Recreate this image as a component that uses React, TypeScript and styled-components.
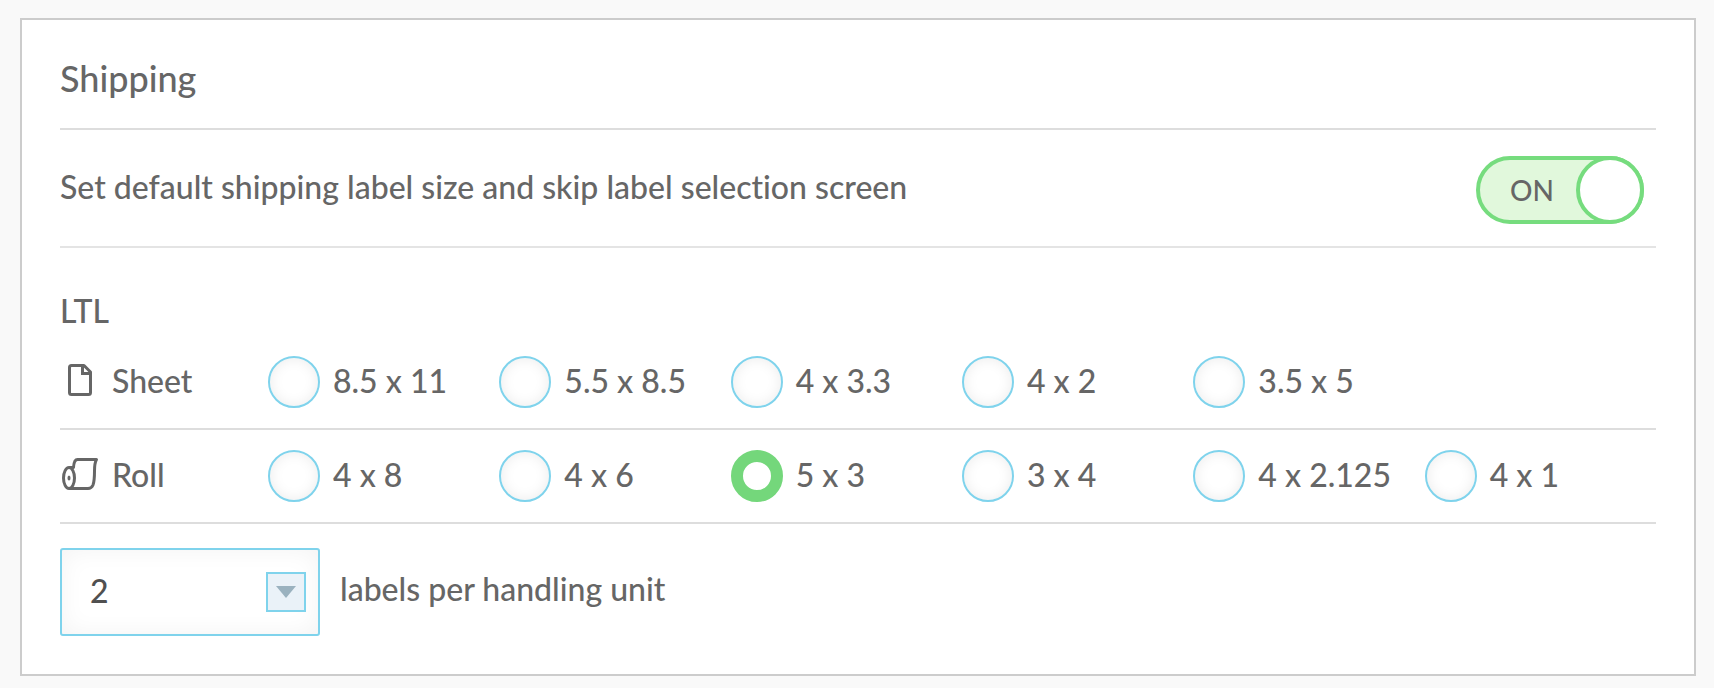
import React, { useState } from "react";
import styled, { createGlobalStyle } from "styled-components";

const GlobalStyle = createGlobalStyle`
  *, *::before, *::after { box-sizing: border-box; }
  body {
    margin: 0;
    background: #f9f9f9;
    color: #666;
    font-family: Lato, "Open Sans", sans-serif;
    font-size: 32px;
    font-weight: 500;
    font-variant-ligatures: none;
    line-height: 40px;
  }
`;

const Page = styled.main`
  padding: 18px 18px 12px 20px;
`;

const Card = styled.section`
  padding: 0 38px 38px;
  background: #fff;
  border: 2px solid #ccc;
`;

const Title = styled.h2`
  margin: 0;
  padding: 36px 0 28px;
  border-bottom: 2px solid #ddd;
  font-size: 36px;
  font-weight: 500;
  line-height: 44px;
`;

const SettingRow = styled.div`
  display: flex;
  align-items: center;
  justify-content: space-between;
  padding: 26px 12px 22px 0;
  border-bottom: 2px solid #e4e4e4;
`;

const SettingText = styled.label`
  padding-bottom: 6px;
`;

const Toggle = styled.label`
  display: grid;
  width: 168px;
  height: 68px;
  cursor: pointer;
`;

const ToggleInput = styled.input`
  grid-area: 1 / 1;
  appearance: none;
  display: flex;
  justify-content: flex-end;
  width: 100%;
  height: 100%;
  margin: 0;
  border: 4px solid #ccc;
  border-radius: 34px;
  background: #f4f4f4;
  cursor: pointer;

  &::after {
    content: "";
    width: 68px;
    height: 68px;
    margin: -4px;
    border: 4px solid #ccc;
    border-radius: 50%;
    background: #fff;
  }
  &:not(:checked) { justify-content: flex-start; }
  &:checked { border-color: #76dc7e; background: #e1f8dc; }
  &:checked::after { border-color: #76dc7e; }
`;

const ToggleText = styled.span<{ $on: boolean }>`
  grid-area: 1 / 1;
  z-index: 1;
  align-self: center;
  justify-self: ${(p) => (p.$on ? "start" : "end")};
  padding: 0 34px;
  font-size: 28px;
  pointer-events: none;
`;

const GroupTitle = styled.h3`
  margin: 0;
  padding: 43px 0 5px;
  font-size: 32px;
  font-weight: 500;
  line-height: 40px;
`;

const SizeRow = styled.fieldset`
  display: flex;
  align-items: center;
  margin: 0;
  padding: 20px 0;
  border: 0;
  border-bottom: 2px solid #ddd;
`;

const RowHead = styled.div`
  display: flex;
  align-items: center;
  flex: 0 0 208px;
  gap: 12px;
`;

const Options = styled.div`
  display: grid;
  grid-template-columns: repeat(6, 1fr);
  flex: 1;
`;

const Option = styled.label`
  display: flex;
  align-items: center;
  gap: 13px;
  white-space: nowrap;
  cursor: pointer;
`;

const RowText = styled.span`
  padding-bottom: 2px;
`;

const Radio = styled.input`
  appearance: none;
  flex: none;
  width: 52px;
  height: 52px;
  margin: 0;
  border: 2px solid #7fd3ec;
  border-radius: 50%;
  background: #fff;
  box-shadow: inset 0 0 14px rgba(0, 0, 0, 0.08);
  cursor: pointer;

  &:checked {
    border: 12px solid #74d77b;
    box-shadow: none;
  }
`;

const UnitRow = styled.div`
  display: flex;
  align-items: center;
  gap: 20px;
  padding-top: 24px;
`;

const SelectBox = styled.div`
  display: grid;
  width: 260px;
  height: 88px;
`;

const Select = styled.select`
  grid-area: 1 / 1;
  appearance: none;
  width: 100%;
  padding: 0 60px 2px 28px;
  border: 2px solid #7fd3ec;
  border-radius: 3px;
  background: #fff;
  box-shadow: inset 0 0 24px rgba(0, 0, 0, 0.05);
  color: #505050;
  font: inherit;
`;

const SelectArrow = styled.span`
  grid-area: 1 / 1;
  display: grid;
  place-items: center;
  align-self: center;
  justify-self: end;
  width: 40px;
  height: 40px;
  margin-right: 14px;
  border: 2px solid #7fd3ec;
  background: #eaf2f8;
  pointer-events: none;
`;

const UnitLabel = styled.label`
  padding-bottom: 6px;
`;

const SheetIcon = () => (
  <svg width="40" height="40" viewBox="0 0 40 40" fill="none" stroke="#666" strokeWidth="3" strokeLinejoin="round" aria-hidden="true">
    <path d="M11.5 3.500H24L30.500 10V30.500Q30.500 32.500 28.500 32.500H11.500Q9.500 32.500 9.500 30.500V5.500Q9.500 3.500 11.500 3.500Z" />
    <path d="M22.500 4V11.500H30" strokeLinejoin="miter" />
  </svg>
);

const RollIcon = () => (
  <svg width="40" height="40" viewBox="0 0 40 40" fill="none" stroke="#666" strokeWidth="3" strokeLinejoin="round" aria-hidden="true">
    <ellipse cx="9" cy="22" rx="5.500" ry="10.500" />
    <ellipse cx="9" cy="22" rx="1.500" ry="2.600" fill="#666" stroke="none" />
    <path d="M9 11.500H13.500Q14 3.500 17.500 3.500H36.500Q34.500 7 34.500 15Q34.500 25 33 29Q31.500 32.500 28 32.500H9" />
  </svg>
);

const rows = [
  { name: "Sheet", Icon: SheetIcon, sizes: ["8.5 x 11", "5.5 x 8.5", "4 x 3.3", "4 x 2", "3.5 x 5"] },
  { name: "Roll", Icon: RollIcon, sizes: ["4 x 8", "4 x 6", "5 x 3", "3 x 4", "4 x 2.125", "4 x 1"] },
];

export default function App() {
  const [on, setOn] = useState(true);
  const [size, setSize] = useState("5 x 3");
  const [count, setCount] = useState("2");

  return (
    <Page>
      <GlobalStyle />
      <Card>
        <Title>Shipping</Title>
        <SettingRow>
          <SettingText htmlFor="skip-selection">
            Set default shipping label size and skip label selection screen
          </SettingText>
          <Toggle>
            <ToggleInput
              id="skip-selection"
              type="checkbox"
              role="switch"
              checked={on}
              onChange={(e) => setOn(e.target.checked)}
            />
            <ToggleText $on={on}>{on ? "ON" : "OFF"}</ToggleText>
          </Toggle>
        </SettingRow>
        <GroupTitle>LTL</GroupTitle>
        {rows.map(({ name, Icon, sizes }) => (
          <SizeRow key={name} aria-label={name}>
            <RowHead>
              <Icon />
              <RowText>{name}</RowText>
            </RowHead>
            <Options>
              {sizes.map((s) => (
                <Option key={s}>
                  <Radio type="radio" name="ltl-size" value={s} checked={size === s} onChange={() => setSize(s)} />
                  <RowText>{s}</RowText>
                </Option>
              ))}
            </Options>
          </SizeRow>
        ))}
        <UnitRow>
          <SelectBox>
            <Select id="label-count" value={count} onChange={(e) => setCount(e.target.value)}>
              {["1", "2", "3", "4"].map((n) => (
                <option key={n}>{n}</option>
              ))}
            </Select>
            <SelectArrow>
              <svg width="20" height="12" viewBox="0 0 20 12" aria-hidden="true">
                <path d="M0 0H20L10 12Z" fill="#9ab2bf" />
              </svg>
            </SelectArrow>
          </SelectBox>
          <UnitLabel htmlFor="label-count">labels per handling unit</UnitLabel>
        </UnitRow>
      </Card>
    </Page>
  );
}
